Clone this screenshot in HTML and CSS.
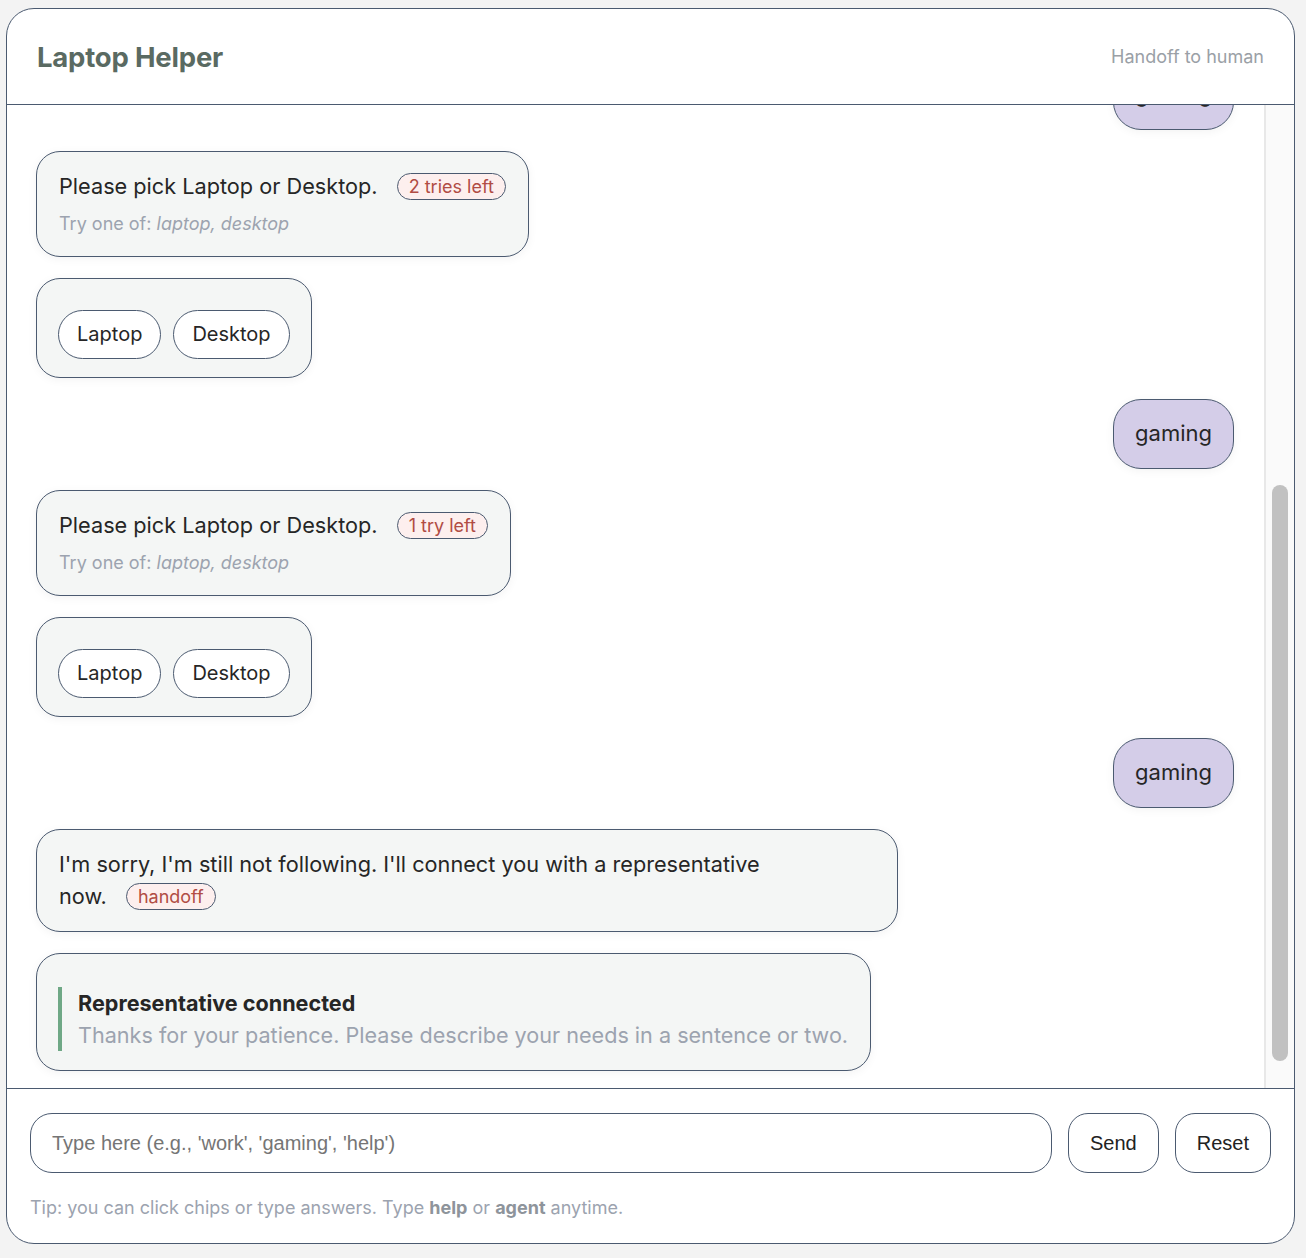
FILE: index.html
```html
<!DOCTYPE html>
<html lang="en">
<head>
<meta charset="utf-8">
<title>Laptop Helper</title>
<link rel="stylesheet" href="styles.css">
</head>
<body>
<div class="app">
  <header class="header">
    <h1 class="title">Laptop Helper</h1>
    <span class="handoff-link">Handoff to human</span>
  </header>
  <div class="body-row">
    <main class="messages">
      <div class="thread">
        <div class="bubble bot">Hi! I'm Laptop Helper. I'll ask a few quick questions to find the right fit.</div>
        <div class="bubble bot">
          <div class="main">What will you mainly use it for?</div>
          <div class="sub">Try one of: <em>work, gaming, school</em></div>
        </div>
        <div class="bubble bot chips-bubble">
          <div class="chips"><button class="chip">Work</button><button class="chip">Gaming</button><button class="chip">School</button></div>
        </div>
        <div class="bubble user">gaming</div>
        <div class="bubble bot">Great! Do you want a Laptop or a Desktop?</div>
        <div class="bubble bot chips-bubble">
          <div class="chips"><button class="chip">Laptop</button><button class="chip">Desktop</button></div>
        </div>
        <div class="bubble user">gaming</div>

        <div class="bubble bot">
          <div class="main">Please pick Laptop or Desktop. <span class="badge">2 tries left</span></div>
          <div class="sub">Try one of: <em>laptop, desktop</em></div>
        </div>
        <div class="bubble bot chips-bubble">
          <div class="chips"><button class="chip">Laptop</button><button class="chip">Desktop</button></div>
        </div>
        <div class="bubble user">gaming</div>
        <div class="bubble bot">
          <div class="main">Please pick Laptop or Desktop. <span class="badge">1 try left</span></div>
          <div class="sub">Try one of: <em>laptop, desktop</em></div>
        </div>
        <div class="bubble bot chips-bubble">
          <div class="chips"><button class="chip">Laptop</button><button class="chip">Desktop</button></div>
        </div>
        <div class="bubble user">gaming</div>
        <div class="bubble bot wide">I'm sorry, I'm still not following. I'll connect you with a representative <span class="nowrap">now. <span class="badge">handoff</span></span></div>
        <div class="bubble bot rep-bubble">
          <div class="rep">
            <div class="rep-title">Representative connected</div>
            <div class="rep-text">Thanks for your patience. Please describe your needs in a sentence or two.</div>
          </div>
        </div>
      </div>
    </main>
    <div class="scrollbar" aria-hidden="true"><div class="thumb"></div></div>
  </div>
  <footer class="footer">
    <div class="composer">
      <input class="input" type="text" placeholder="Type here (e.g., 'work', 'gaming', 'help')">
      <button class="btn">Send</button>
      <button class="btn">Reset</button>
    </div>
    <p class="tip">Tip: you can click chips or type answers. Type <b>help</b> or <b>agent</b> anytime.</p>
  </footer>
</div>
</body>
</html>
```

FILE: styles.css
```css
* { box-sizing: border-box; }

body {
  margin: 0;
  background: #f3f3f3;
  font-family: Inter, "Noto Sans", sans-serif;
  color: #262626;
}

.app {
  width: 1289px;
  height: 1236px;
  margin: 8px 0 0 6px;
  border: 1px solid #4b5a70;
  border-radius: 28px;
  background: #fff;
  display: flex;
  flex-direction: column;
  overflow: hidden;
}

.header {
  flex: none;
  height: 96px;
  border-bottom: 1px solid #4b5a70;
  display: flex;
  align-items: center;
  justify-content: space-between;
  padding: 0 30px;
}

.title {
  margin: 0;
  font-size: 27.5px;
  font-weight: 700;
  color: #5a6a62;
  letter-spacing: -0.2px;
}

.handoff-link {
  font-size: 18px;
  color: #9aa0a6;
}

.body-row {
  flex: 1;
  min-height: 0;
  display: flex;
}

.messages {
  flex: 1;
  min-width: 0;
  overflow-y: auto;
  scrollbar-width: none;
  display: flex;
  flex-direction: column-reverse;
}

.scrollbar {
  flex: none;
  width: 30px;
  position: relative;
  background: #fafafa;
  border-left: 2px solid #e8e8e8;
}

.thumb {
  position: absolute;
  top: 380px;
  left: 6px;
  width: 16px;
  height: 576px;
  border-radius: 8px;
  background: #c1c1c1;
}

.thread {
  display: flex;
  flex-direction: column;
  gap: 21px;
  padding: 20px 30px 17px 29px;
}

.bubble {
  align-self: flex-start;
  max-width: 862px;
  background: #f4f6f5;
  border: 1px solid #4b5a70;
  border-radius: 24px;
  padding: 18px 22px 19px;
  font-size: 21.7px;
  line-height: 32px;
  box-shadow: 0 2px 10px rgba(0, 0, 0, 0.05);
}

.nowrap {
  white-space: nowrap;
}

.bubble.user {
  align-self: flex-end;
  background: #d4cde8;
  border-radius: 28px;
  padding: 17px 21px 18px;
  font-size: 22px;
  line-height: 33px;
}

.sub {
  margin-top: 9px;
  font-size: 18px;
  line-height: 26px;
  color: #9ca3af;
}

.sub em {
  font-style: italic;
}

.badge {
  display: inline-block;
  margin-left: 13px;
  padding: 1px 11px;
  border: 1px solid #4b5a70;
  border-radius: 14px;
  background: #fdefee;
  color: #b14c44;
  font-size: 18px;
  line-height: 23px;
  vertical-align: 1px;
}

.chips-bubble {
  padding: 31px 21px 18px 21px;
}

.chips {
  display: flex;
  gap: 12px;
}

.chip {
  font-family: inherit;
  font-size: 20px;
  line-height: 25px;
  color: #262626;
  background: #fff;
  border: 1px solid #4b5a70;
  border-radius: 25px;
  padding: 11px 18px;
}

.rep-bubble {
  padding: 33px 22px 19px 21px;
}

.rep {
  border-left: 4px solid #6fa886;
  padding-left: 16px;
  font-size: 21.6px;
  line-height: 32px;
}

.rep-title {
  font-weight: 700;
  color: #262626;
}

.rep-text {
  color: #9ca3af;
}

.footer {
  flex: none;
  border-top: 1px solid #4b5a70;
  padding: 24px 23px 24px 23px;
}

.composer {
  display: flex;
  gap: 16px;
}

.input {
  flex: 1;
  height: 60px;
  border: 1px solid #4b5a70;
  border-radius: 22px;
  padding: 0 21px;
  font-family: "Liberation Sans", Arial, sans-serif;
  font-size: 20px;
  color: #222;
  background: #fff;
}

.input::placeholder {
  color: #757575;
}

.btn {
  height: 60px;
  padding: 0 21px;
  border: 1px solid #4b5a70;
  border-radius: 20px;
  background: #fff;
  font-family: "Liberation Sans", Arial, sans-serif;
  font-size: 20px;
  color: #222;
}

.tip {
  margin: 24px 0 0 0;
  font-size: 18px;
  line-height: 22px;
  color: #9ca3af;
}

.tip b {
  color: #8e949b;
  font-weight: 700;
}
```
